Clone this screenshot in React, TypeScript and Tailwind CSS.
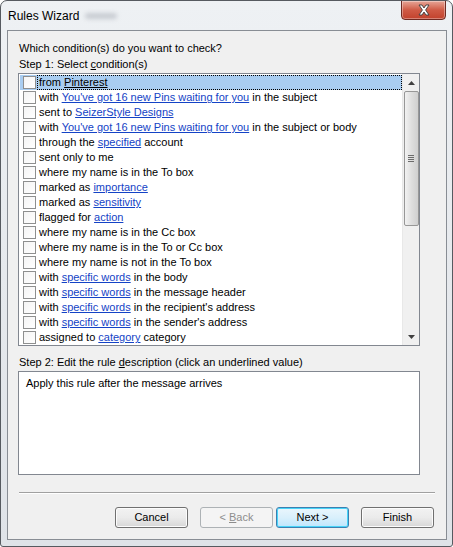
import React from 'react';

type Part = string | { link: string };

const CONDITIONS: Part[][] = [
  ['from ', { link: 'Pinterest' }],
  ['with ', { link: "You've got 16 new Pins waiting for you" }, ' in the subject'],
  ['sent to ', { link: 'SeizerStyle Designs' }],
  ['with ', { link: "You've got 16 new Pins waiting for you" }, ' in the subject or body'],
  ['through the ', { link: 'specified' }, ' account'],
  ['sent only to me'],
  ['where my name is in the To box'],
  ['marked as ', { link: 'importance' }],
  ['marked as ', { link: 'sensitivity' }],
  ['flagged for ', { link: 'action' }],
  ['where my name is in the Cc box'],
  ['where my name is in the To or Cc box'],
  ['where my name is not in the To box'],
  ['with ', { link: 'specific words' }, ' in the body'],
  ['with ', { link: 'specific words' }, ' in the message header'],
  ['with ', { link: 'specific words' }, " in the recipient's address"],
  ['with ', { link: 'specific words' }, " in the sender's address"],
  ['assigned to ', { link: 'category' }, ' category'],
];

const FONT = { fontFamily: '"Liberation Sans", Arial, sans-serif' };

function Checkbox() {
  return (
    <span className="w-[13px] h-[13px] shrink-0 border border-[#8e8f8f] bg-gradient-to-br from-[#f4f4f4] to-white" />
  );
}

function Row({ parts, selected }: { parts: Part[]; selected?: boolean }) {
  const content = parts.map((p, i) =>
    typeof p === 'string' ? (
      <span key={i}>{p}</span>
    ) : (
      <span
        key={i}
        className={selected ? 'underline text-black' : 'underline text-[#1443c6]'}
      >
        {p.link}
      </span>
    )
  );
  return (
    <div className={`h-[15px] flex items-center pl-[3px] ${selected ? 'bg-[#a9cdf1]' : ''}`}>
      <Checkbox />
      <div
        className={`ml-[1px] h-[15px] flex items-center whitespace-pre ${
          selected ? 'pl-[1px] flex-1 border border-dotted border-black' : 'pl-[2px]'
        }`}
      >
        {content}
      </div>
    </div>
  );
}

function Scrollbar() {
  return (
    <div className="w-[17px] h-full bg-[#f0f0f0] border-l border-[#e8e8e8] flex flex-col items-center">
      <div className="h-[17px] w-full flex items-center justify-center">
        <svg width="7" height="4" viewBox="0 0 7 4">
          <path d="M3.5 0 L7 4 L0 4 Z" fill="#404040" />
        </svg>
      </div>
      <div className="w-[15px] h-[135px] rounded-[2px] border border-[#979797] bg-gradient-to-r from-[#f2f2f2] via-[#dedede] to-[#cfcfcf] flex items-center justify-center">
        <div className="flex flex-col gap-[1px]">
          <span className="w-[6px] h-[1px] bg-[#6b6b6b]" />
          <span className="w-[6px] h-[1px] bg-[#6b6b6b]" />
          <span className="w-[6px] h-[1px] bg-[#6b6b6b]" />
          <span className="w-[6px] h-[1px] bg-[#6b6b6b]" />
        </div>
      </div>
      <div className="flex-1" />
      <div className="h-[17px] w-full flex items-center justify-center">
        <svg width="7" height="4" viewBox="0 0 7 4">
          <path d="M0 0 L7 0 L3.5 4 Z" fill="#404040" />
        </svg>
      </div>
    </div>
  );
}

function Button({
  children,
  disabled,
  primary,
}: {
  children: React.ReactNode;
  disabled?: boolean;
  primary?: boolean;
}) {
  let cls =
    'w-[73px] h-[21px] rounded-[3px] border text-[11px] leading-[19px] text-center whitespace-pre ';
  if (disabled) {
    cls += 'border-[#adb2b5] bg-[#f4f4f4] text-[#8d8d8d]';
  } else if (primary) {
    cls += 'border-[#3c7fb1] bg-gradient-to-b from-[#eaf6fd] via-[#d9f0fc] to-[#bee6fd] text-black shadow-[inset_0_0_0_1px_#48d4f8]';
  } else {
    cls += 'border-[#707070] bg-gradient-to-b from-[#f2f2f2] via-[#ebebeb] to-[#d7d7d7] text-black shadow-[inset_0_0_0_1px_#fcfcfc]';
  }
  return <div className={cls}>{children}</div>;
}

export default function App() {
  return (
    <div
      className="w-[453px] h-[547px] flex flex-col bg-gradient-to-b from-[#eef1f4] via-[#e6e9ed] to-[#dfe3e8] border border-[#565a60] rounded-t-[7px] rounded-b-[3px] overflow-hidden text-black"
      style={FONT}
    >
      <div className="h-[29px] shrink-0 relative flex items-center pl-[7px]">
        <span className="text-[12px] text-black">Rules Wizard</span>
        <span className="ml-[6px] w-[32px] h-[6px] rounded-full bg-[#c8ccd2] blur-[2px]" />
        <div className="absolute top-[-1px] right-[6px] w-[45px] h-[20px] rounded-b-[4px] border border-[#6e2a22] bg-gradient-to-b from-[#e6a597] via-[#cf5a45] to-[#c2412c] flex items-center justify-center shadow-[inset_0_0_0_1px_rgba(255,255,255,0.35)]">
          <svg width="14" height="12" viewBox="0 0 14 12">
            <path
              d="M2 1 L5 1 L7 4 L9 1 L12 1 L8.6 6 L12 11 L9 11 L7 8 L5 11 L2 11 L5.4 6 Z"
              fill="#ffffff"
              stroke="#3b3b3b"
              strokeWidth="0.9"
            />
          </svg>
        </div>
      </div>

      <div className="ml-[6px] mr-[5px] mb-[6px] flex-1 border border-[#888d94] bg-[#f0f0f0] flex flex-col pl-[10px] pt-[9px]">
        <div className="h-[16px] leading-[16px] text-[11px] pl-[1px]">
          Which condition(s) do you want to check?
        </div>
        <div className="h-[16px] leading-[16px] text-[11px] pl-[1px]">
          Step 1: Select <span className="underline">c</span>ondition(s)
        </div>

        <div className="mt-[1px] w-[402px] h-[273px] border border-[#828790] bg-white flex text-[11px]">
          <div className="flex-1 pt-[1px] pl-[1px]">
            {CONDITIONS.map((parts, i) => (
              <Row key={i} parts={parts} selected={i === 0} />
            ))}
          </div>
          <Scrollbar />
        </div>

        <div className="mt-[8px] h-[16px] leading-[16px] text-[11px] pl-[1px]">
          Step 2: Edit the rule <span className="underline">d</span>escription (click an underlined value)
        </div>
        <div className="mt-[1px] w-[402px] h-[104px] border border-[#828790] bg-white text-[11px] pl-[7px] pt-[3px]">
          Apply this rule after the message arrives
        </div>

        <div className="mt-[17px] w-[416px] ml-[1px] h-[2px] border-t border-[#a0a0a0] border-b border-b-white" />

        <div className="mt-[13px] flex pl-[97px]">
          <Button>Cancel</Button>
          <div className="w-[12px]" />
          <Button disabled>
            {'< '}<span className="underline">B</span>ack
          </Button>
          <div className="w-[3px]" />
          <Button primary>Next &gt;</Button>
          <div className="w-[12px]" />
          <Button>Finish</Button>
        </div>
      </div>
    </div>
  );
}
